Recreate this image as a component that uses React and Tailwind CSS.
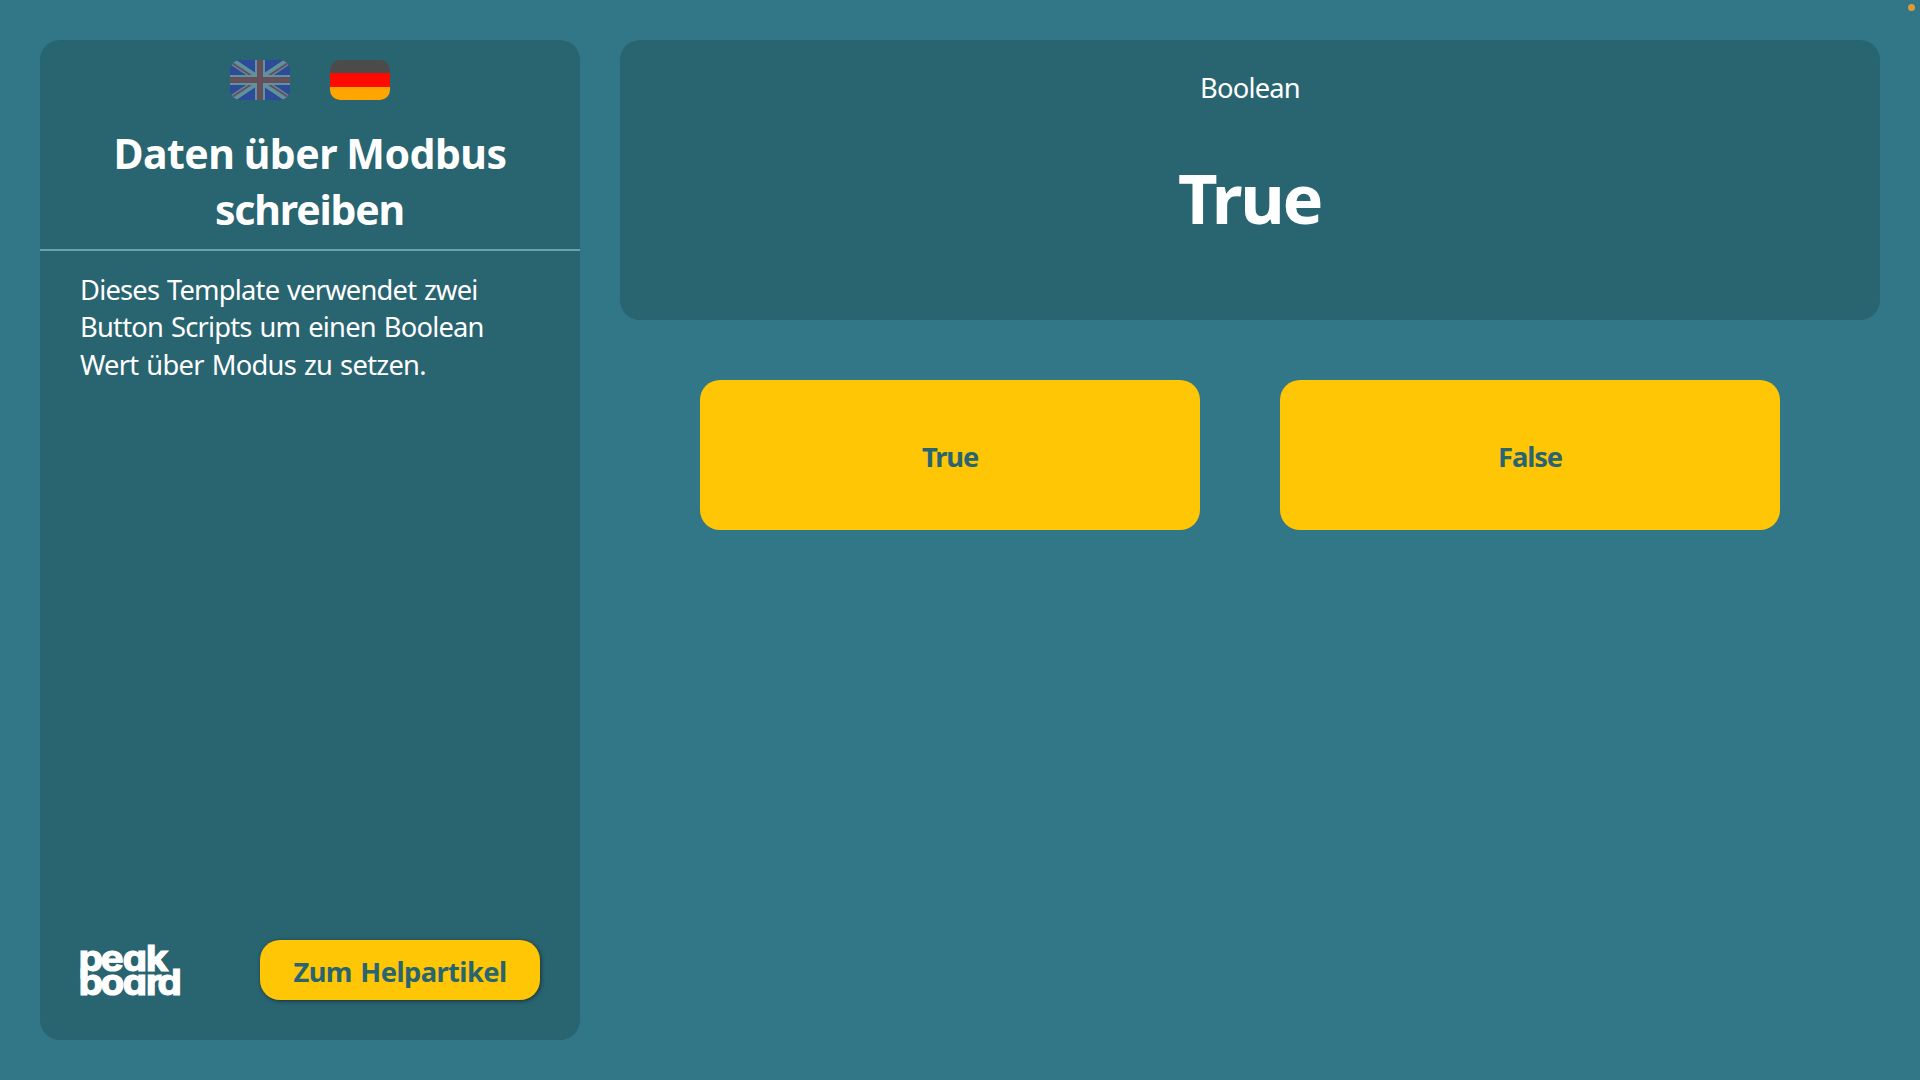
import React from "react";

function UkFlag() {
  return (
    <svg viewBox="0 0 60 40" className="h-10 w-[60px] rounded-[10px]" aria-hidden="true">
      <rect width="60" height="40" fill="#2c4b99" />
      <path d="M0 0L60 40M60 0L0 40" stroke="#5f929c" strokeWidth="7" />
      <path d="M0 1.5L30 21.5M60 1.5L30 21.5M0 38.5L30 18.5M60 38.5L30 18.5" stroke="#664e5b" strokeWidth="2" />
      <path d="M30 0V40M0 20H60" stroke="#5f929c" strokeWidth="10" />
      <path d="M30 0V40M0 20H60" stroke="#664e5b" strokeWidth="6" />
    </svg>
  );
}

function GermanFlag() {
  return (
    <div className="flex h-10 w-[60px] flex-col overflow-hidden rounded-[10px]">
      <div className="flex-1 bg-[#4b4b4b]" />
      <div className="flex-1 bg-[#ff0a00]" />
      <div className="flex-1 bg-[#ffa500]" />
    </div>
  );
}

function Logo() {
  return (
    <svg
      viewBox="0 0 104 60"
      className="h-[60px] w-[104px] overflow-visible font-['Inter',sans-serif] text-[35.5px] font-bold [font-feature-settings:'cv11']"
      fill="#fff"
      stroke="#fff"
      strokeWidth="1.2"
      aria-label="peakboard"
    >
      <g transform="scale(1.08 1)">
        <text x="-1.1 19.2 39.6 61" y="30.6">peak</text>
        <text x="-1.1 19.2 39.6 61 71.7" y="55.5">board</text>
      </g>
    </svg>
  );
}

export default function App() {
  return (
    <div className="relative flex h-[1080px] w-[1920px] gap-10 overflow-hidden bg-[#327787] p-10 font-['Noto_Sans','Open_Sans',sans-serif] text-white">
      <aside className="flex h-[1000px] w-[540px] flex-col rounded-[20px] bg-[#296471]">
        <div className="flex justify-center gap-10 pt-5">
          <UkFlag />
          <GermanFlag />
        </div>
        <h1 className="mt-[25px] h-[124px] text-center text-[41px] font-bold leading-[56px]">
          <span className="block tracking-[-0.52px] [word-spacing:-0.8px]">Daten über Modbus</span>
          <span className="block pr-px tracking-[-1.17px]">schreiben</span>
        </h1>
        <div className="h-0.5 bg-[#66a4b2]" />
        <p className="mt-5 px-10 text-[27.3px] leading-[37.33px]">
          <span className="block tracking-[-0.79px] [word-spacing:1.5px]">Dieses Template verwendet zwei</span>
          <span className="block tracking-[-0.77px] [word-spacing:1.5px]">Button Scripts um einen Boolean</span>
          <span className="block tracking-[-0.72px] [word-spacing:1.5px]">Wert über Modus zu setzen.</span>
        </p>
        <div className="mt-auto flex items-center justify-between px-10 pb-10">
          <Logo />
          <button className="h-[60px] w-[280px] rounded-[20px] bg-[#ffc605] pt-[5px] text-[27.3px] font-bold tracking-[-0.57px] text-[#296471] shadow-[1px_1px_4px_rgba(0,0,0,0.5)] [word-spacing:2px]">
            Zum Helpartikel
          </button>
        </div>
      </aside>
      <main className="flex w-[1260px] flex-col">
        <section className="flex h-[280px] flex-col items-center rounded-[20px] bg-[#296471] pt-[30px]">
          <div className="text-[27.3px] leading-9 tracking-[-0.78px]">Boolean</div>
          <div className="mt-[45px] pr-px text-[68.6px] font-bold leading-[94px] tracking-[-2.3px]">True</div>
        </section>
        <div className="mt-[60px] flex justify-center gap-20 pr-5">
          <button className="h-[150px] w-[500px] rounded-[20px] bg-[#ffc605] pt-[5px] text-[27.3px] font-bold tracking-[-1.1px] text-[#296471]">True</button>
          <button className="h-[150px] w-[500px] rounded-[20px] bg-[#ffc605] pt-[5px] text-[27.3px] font-bold tracking-[-1.1px] text-[#296471]">False</button>
        </div>
      </main>
      <div className="absolute right-[5px] top-[4px] size-[7px] rounded-full bg-[#e09a35]" />
    </div>
  );
}
